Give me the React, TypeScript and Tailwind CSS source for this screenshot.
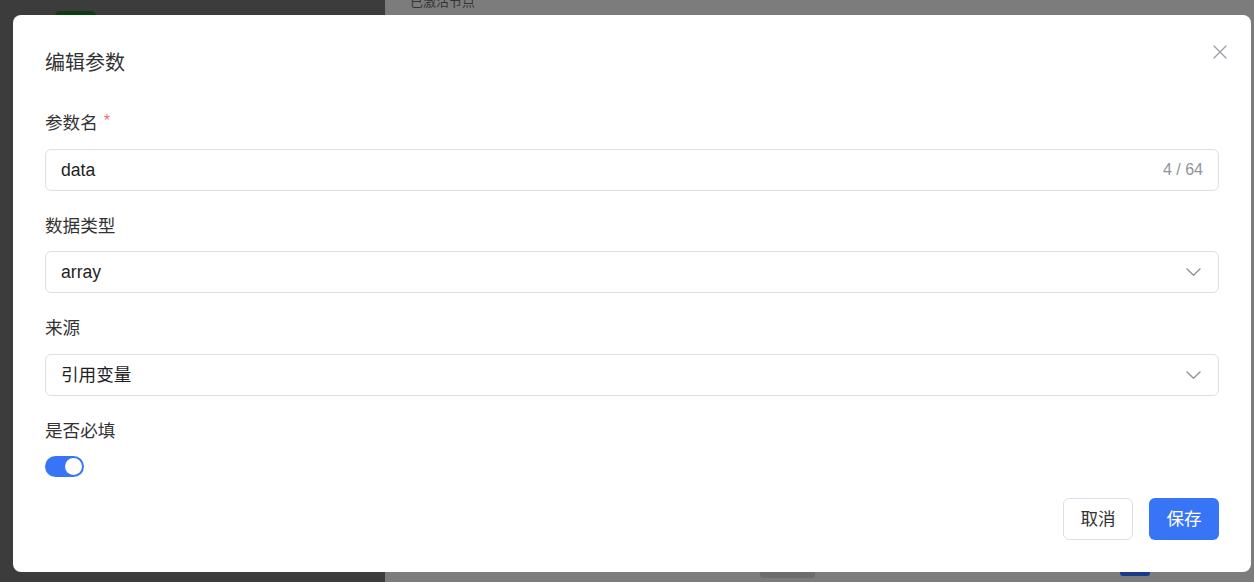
import React from "react";

const font = { fontFamily: '"Liberation Sans", "Noto Sans CJK SC", sans-serif' };

function Chevron() {
  return (
    <svg width="15" height="8" viewBox="0 0 15 8" fill="none" className="shrink-0">
      <path d="M0.8 0.8l6.7 6.4 6.7-6.4" stroke="#8a8e96" strokeWidth="1.2" strokeLinecap="round" strokeLinejoin="round" />
    </svg>
  );
}

function Label({ children, required, tight }: { children: React.ReactNode; required?: boolean; tight?: boolean }) {
  return (
    <div className={`h-6 flex items-center text-[17.6px] text-[#333333] leading-6 ${tight ? "mb-[13px]" : "mb-[14px]"}`}>
      <span>{children}</span>
      {required && <span className="text-[#f56c6c] ml-[6px] text-[16px] relative -top-[2px]">*</span>}
    </div>
  );
}

function Select({ value }: { value: string }) {
  return (
    <div className="h-[42px] border border-[#dcdfe6] rounded-[6px] flex items-center justify-between pl-[15px] pr-[17px] mb-[23px]">
      <span className="text-[17.6px] text-[#1f1f1f]">{value}</span>
      <Chevron />
    </div>
  );
}

export default function App() {
  return (
    <div className="relative w-[1254px] h-[582px] overflow-hidden flex" style={font}>
      <div className="w-[385px] h-full bg-[#3c3c3c] relative">
        <div className="absolute left-[55px] top-[11px] w-[41px] h-[10px] rounded-full bg-[#0e3d12]" />
      </div>
      <div className="flex-1 h-full bg-[#7c7c7c] relative">
        <div className="absolute left-[25px] -top-[8px] text-[13px] text-[#333]">已激活节点</div>
        <div className="absolute left-[375px] bottom-[4px] w-[55px] h-[10px] rounded bg-[#6d6d6d]" />
        <div className="absolute left-[735px] bottom-[6px] w-[30px] h-[6px] rounded bg-[#1a3a8a]" />
      </div>

      <div className="absolute left-[13px] top-[15px] w-[1238px] h-[557px] bg-white rounded-[8px] px-[32px] pt-[34px] flex flex-col">
        <div className="h-7 flex items-center text-[20px] text-[#333333] leading-7">编辑参数</div>
        <svg className="absolute right-[24px] top-[30px]" width="14" height="14" viewBox="0 0 14 14" fill="none">
          <path d="M1 1l12 12M13 1L1 13" stroke="#9a9ea6" strokeWidth="1.3" strokeLinecap="round" />
        </svg>

        <div className="mt-[34px]">
          <Label required>参数名</Label>
          <div className="h-[42px] border border-[#dcdfe6] rounded-[6px] flex items-center justify-between pl-[15px] pr-[15px] mb-[23px]">
            <span className="text-[17.6px] text-[#1f1f1f]">data</span>
            <span className="text-[16px] text-[#8f949c]">4 / 64</span>
          </div>

          <Label tight>数据类型</Label>
          <Select value="array" />

          <Label>来源</Label>
          <Select value="引用变量" />

          <Label tight>是否必填</Label>
          <div className="w-[39px] h-[21px] rounded-full bg-[#3875f6] flex items-center justify-end pr-[2px]">
            <div className="w-[17px] h-[17px] rounded-full bg-white" />
          </div>
        </div>

        <div className="flex justify-end gap-4 mt-[21px]">
          <button className="w-[70px] h-[42px] border border-[#dcdfe6] rounded-[6px] text-[17.6px] text-[#333333] bg-white">取消</button>
          <button className="w-[70px] h-[42px] rounded-[6px] text-[17.6px] text-white bg-[#3875f6]">保存</button>
        </div>
      </div>
    </div>
  );
}
